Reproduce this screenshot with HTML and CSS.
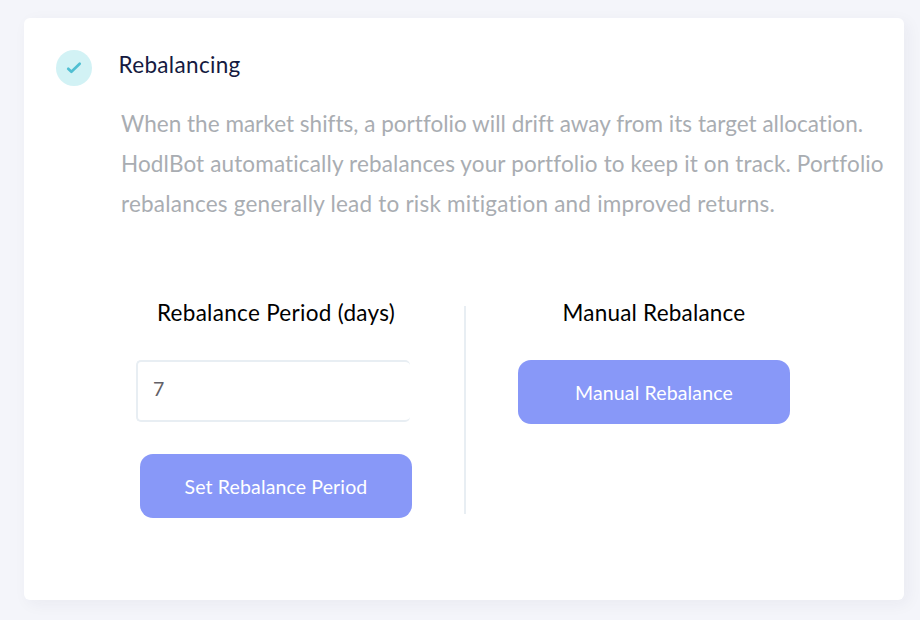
FILE: index.html
```html
<!DOCTYPE html>
<html lang="en">
<head>
<meta charset="utf-8">
<title>Rebalancing</title>
<link rel="stylesheet" href="styles.css">
</head>
<body>
<main class="card">
  <span class="status">
    <svg width="36" height="36" viewBox="0 0 36 36" fill="none" stroke="#50bfd2" stroke-width="2.7" stroke-linecap="round" stroke-linejoin="round"><path d="M12.2 18.8 15.4 21.8 23.7 13.7"/></svg>
  </span>
  <section class="content">
    <h1 class="title">Rebalancing</h1>
    <p class="description">
      <span class="line line-a">When the market shifts, a portfolio will drift away from its target allocation.</span>
      <span class="line line-b">HodlBot automatically rebalances your portfolio to keep it on track. Portfolio</span>
      <span class="line line-c">rebalances generally lead to risk mitigation and improved returns.</span>
    </p>
    <div class="panels">
      <form class="panel panel-period">
        <h2 class="heading heading-period">Rebalance Period (days)</h2>
        <div class="field">7</div>
        <button class="button button-period" type="button">Set Rebalance Period</button>
      </form>
      <div class="panel panel-manual">
        <h2 class="heading heading-manual">Manual Rebalance</h2>
        <button class="button" type="button">Manual Rebalance</button>
      </div>
    </div>
  </section>
</main>
</body>
</html>
```
FILE: styles.css
```css
* { box-sizing: border-box; }
body {
  margin: 0;
  height: 620px;
  padding: 18px 16px 20px 24px;
  overflow: hidden;
  background: #f4f5fa;
  font-family: "Avenir", "Lato", sans-serif;
  font-variant-ligatures: none;
}
.card {
  display: flex;
  height: 582px;
  padding: 32px 0 0 32px;
  background: #fff;
  border-radius: 6px;
  box-shadow: 4px 4px 16px rgba(40, 40, 80, 0.05);
}
.status {
  flex: none;
  width: 36px;
  height: 36px;
  border-radius: 50%;
  background: #d2f2f5;
}
.status svg { display: block; }
.content { margin-left: 26px; width: 786px; }
h1, h2, p { margin: 0; font-weight: 400; }
.title {
  height: 30px;
  padding-left: 0.5px;
  font-size: 22.5px;
  line-height: 30px;
  letter-spacing: 0.33px;
  color: #151a40;
}
.description {
  margin: 24px 0 0 3px;
  font-size: 22.5px;
  line-height: 40px;
  color: #a9adb2;
}
.line { display: block; width: max-content; white-space: nowrap; }
.line-a { letter-spacing: 0.02px; }
.line-b { letter-spacing: 0.14px; }
.line-c { letter-spacing: 0.22px; }
.panels { display: flex; margin: 82px 0 0 18px; }
.panel { display: flex; flex: none; flex-direction: column; }
.panel-period {
  width: 330px;
  height: 208px;
  border-right: 2px solid #e8eef3;
}
.panel-manual { margin-left: 52px; width: 272px; }
.heading {
  flex: none;
  width: 280px;
  height: 54px;
  font-size: 22.5px;
  line-height: 14px;
  letter-spacing: 0.3px;
  text-align: center;
  white-space: nowrap;
  color: #000;
}
.heading-manual { width: 272px; letter-spacing: 0.2px; }
.field {
  flex: none;
  width: 274px;
  height: 62px;
  padding-left: 15px;
  border: 2px solid #e8eef3;
  border-right: 0;
  border-radius: 5px;
  font-size: 19.5px;
  line-height: 54px;
  color: #626067;
}
.button {
  flex: none;
  width: 272px;
  height: 64px;
  padding: 0;
  border: 0;
  border-radius: 13px;
  background: #8898f8;
  color: #fff;
  font: 19.5px "Avenir", "Lato", sans-serif;
  letter-spacing: 0.14px;
}
.button-period { margin: 32px 0 0 4px; }
```
